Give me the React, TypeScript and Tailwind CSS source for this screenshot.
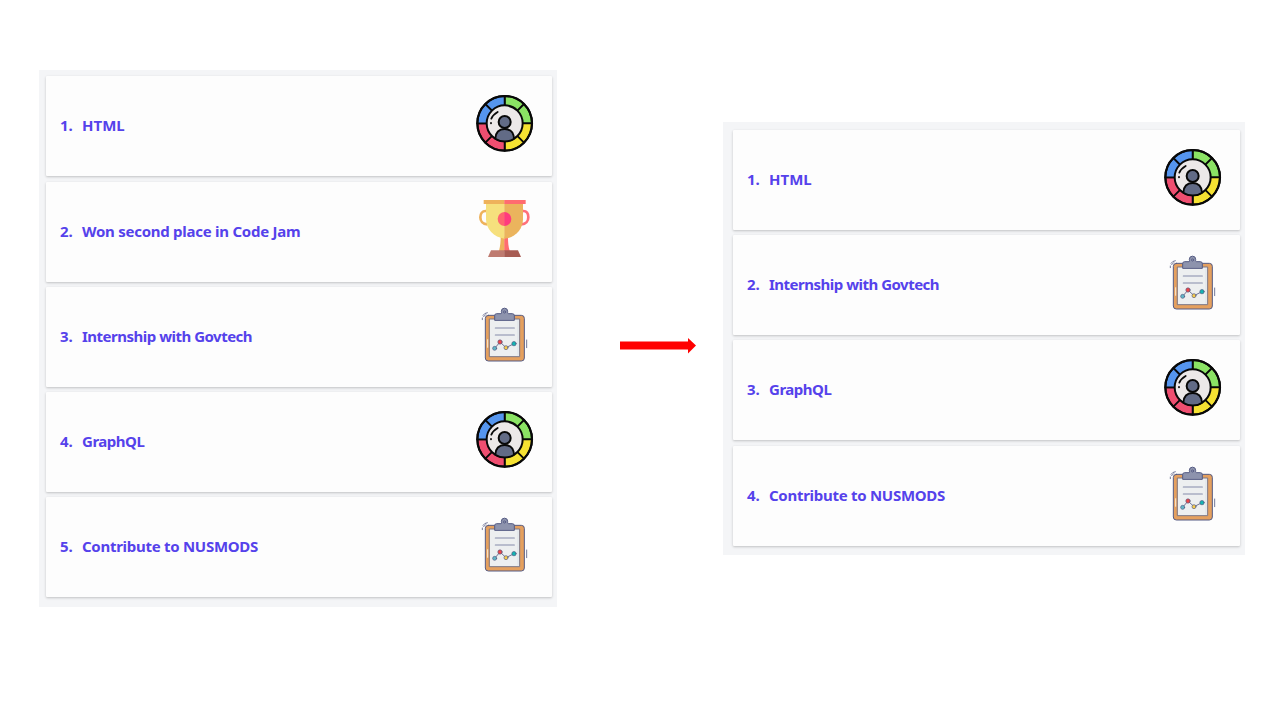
import React from "react";

type Kind = "skill" | "trophy" | "task";
type Item = { label: string; kind: Kind; spacing: string };

const html: Item = { label: "HTML", kind: "skill", spacing: "tracking-[0px]" };
const jam: Item = { label: "Won second place in Code Jam", kind: "trophy", spacing: "tracking-[-0.26px]" };
const intern: Item = { label: "Internship with Govtech", kind: "task", spacing: "tracking-[-0.5px]" };
const graph: Item = { label: "GraphQL", kind: "skill", spacing: "tracking-[-0.48px]" };
const mods: Item = { label: "Contribute to NUSMODS", kind: "task", spacing: "tracking-[-0.28px]" };

function SkillIcon() {
  return (
    <svg viewBox="0 0 210 210" className="h-[70px] w-[70px]" stroke="#080808" strokeLinejoin="round">
      <g strokeWidth="5.5">
        <path d="M104 106V24A82 82 0 0 1 186 106Z" fill="#8be364" />
        <path d="M104 106H186A82 82 0 0 1 104 188Z" fill="#f6e232" />
        <path d="M104 106V188A82 82 0 0 1 22 106Z" fill="#ef4e70" />
        <path d="M104 106H22A82 82 0 0 1 104 24Z" fill="#5595ee" />
        <path d="M46 48L162 164M162 48L46 164" />
      </g>
      <circle cx="104" cy="106" r="82" fill="none" strokeWidth="6.5" />
      <circle cx="104" cy="106" r="54" fill="#ece8e8" strokeWidth="6" />
      <path d="M76 152C77 132 87 123 104 123S131 132 132 152C117 163 93 163 76 152Z" fill="#626b86" strokeWidth="5.5" />
      <circle cx="104" cy="102" r="18" fill="#626b86" strokeWidth="6" />
      <path d="M64 92Q69 80 83 72M63 105V106" fill="none" strokeWidth="5.5" strokeLinecap="round" />
    </svg>
  );
}

function TrophyIcon() {
  return (
    <svg viewBox="0 0 210 210" className="h-[70px] w-[70px]">
      <path d="M51 51H47C37 51 31 59 31 70S38 91 52 91" fill="none" stroke="#eeb25b" strokeWidth="8" />
      <path d="M156 51H160C170 51 175 59 175 70S168 91 154 91" fill="none" stroke="#ff7079" strokeWidth="8" />
      <path d="M92 128H104V171H87C91 155 92 143 92 128Z" fill="#eeb25b" />
      <path d="M103 128H114C114 145 115 156 119 171H103Z" fill="#ff6c70" />
      <path d="M48 29H104V134C71 131 48 104 48 76Z" fill="#f6e07d" />
      <path d="M103 29H159V76C159 104 137 132 103 134Z" fill="#ebb45d" />
      <path d="M41 18H104V30H41Z" fill="#eeb25b" />
      <path d="M103 18H167V30H103Z" fill="#ff6c70" />
      <path d="M104 54A21 21 0 0 0 104 96Z" fill="#ff6470" />
      <path d="M103 54A21 21 0 0 1 103 96Z" fill="#ff3b7e" />
      <path d="M63 169H104V189H54Z" fill="#bf7b70" />
      <path d="M103 169H144L153 189H103Z" fill="#a75c53" />
    </svg>
  );
}

function TaskIcon() {
  return (
    <svg viewBox="0 0 210 210" className="mt-[2px] h-[70px] w-[70px]" stroke="#555b83" strokeWidth="3" strokeLinejoin="round" strokeLinecap="round">
      <rect x="46" y="43" width="117" height="137" rx="9" fill="#e5a05e" />
      <path d="M59 54H149V167H59Z" fill="#edeff0" stroke="#7c7684" />
      <path d="M144 59V163" stroke="#e0e5ea" strokeWidth="4" />
      <path d="M74 57V44Q74 38 80 38H93C96 38 94 34 94 31A9 9 0 0 1 113 31C113 35 112 38 116 38H127Q133 38 133 44V57Z" fill="#8d93ad" />
      <circle cx="103.5" cy="33" r="3" fill="#b2b7c9" />
      <path d="M76 81H133M76 102H133" stroke="#858ba9" strokeWidth="3.5" />
      <path d="M74 142L90 123L108 140L132 128" fill="none" strokeWidth="2.5" />
      <g strokeWidth="2">
        <circle cx="74" cy="142" r="6" fill="#61b8c7" />
        <circle cx="90" cy="123" r="6.5" fill="#f04545" />
        <circle cx="108" cy="140" r="6" fill="#f7cc4c" />
        <circle cx="132" cy="128" r="6.5" fill="#12b5b3" />
      </g>
      <path d="M37 56V51M39 43Q43 36 52 35M47 41L41 47M170 117V140" fill="none" strokeWidth="2.5" />
      <path d="M53 116V139" stroke="#ffebcf" />
    </svg>
  );
}

function Card({ item, index }: { item: Item; index: number }) {
  return (
    <li className="flex h-[100px] items-start justify-between rounded-[1px] bg-[#fdfdfd] pl-[14px] pr-3 pt-3 shadow-[0_1px_3px_rgba(0,0,0,0.14),0_1px_2px_rgba(0,0,0,0.08)]">
      <div className="flex pt-[25px] text-[15px] leading-6 font-bold text-[#5542eb]">
        <span className="w-[22px]">{index}.</span>
        <span className={`whitespace-nowrap ${item.spacing}`}>{item.label}</span>
      </div>
      {item.kind === "skill" ? <SkillIcon /> : item.kind === "trophy" ? <TrophyIcon /> : <TaskIcon />}
    </li>
  );
}

function List({ items, className }: { items: Item[]; className: string }) {
  return (
    <ol className={`flex shrink-0 flex-col gap-[5.25px] bg-[#f4f5f7] ${className}`}>
      {items.map((item, i) => (
        <Card key={item.label} item={item} index={i + 1} />
      ))}
    </ol>
  );
}

export default function App() {
  return (
    <main className="flex h-[720px] w-[1280px] items-start overflow-hidden bg-white pl-[39px] font-['Noto_Sans','Open_Sans',sans-serif]">
      <List items={[html, jam, intern, graph, mods]} className="mt-[70px] h-[537px] w-[518px] pl-[7px] pr-[5px] pt-[6.4px]" />
      <svg viewBox="0 0 76 16" className="mt-[338px] ml-[63px] h-4 w-[76px] shrink-0" fill="#ff0000">
        <path d="M0 3.5H68V0L76 7.5L68 15.5V11.5H0Z" />
      </svg>
      <List items={[html, intern, graph, mods]} className="mt-[122px] ml-[27px] h-[433px] w-[522px] pl-[10px] pr-[5px] pt-[7.8px]" />
    </main>
  );
}
